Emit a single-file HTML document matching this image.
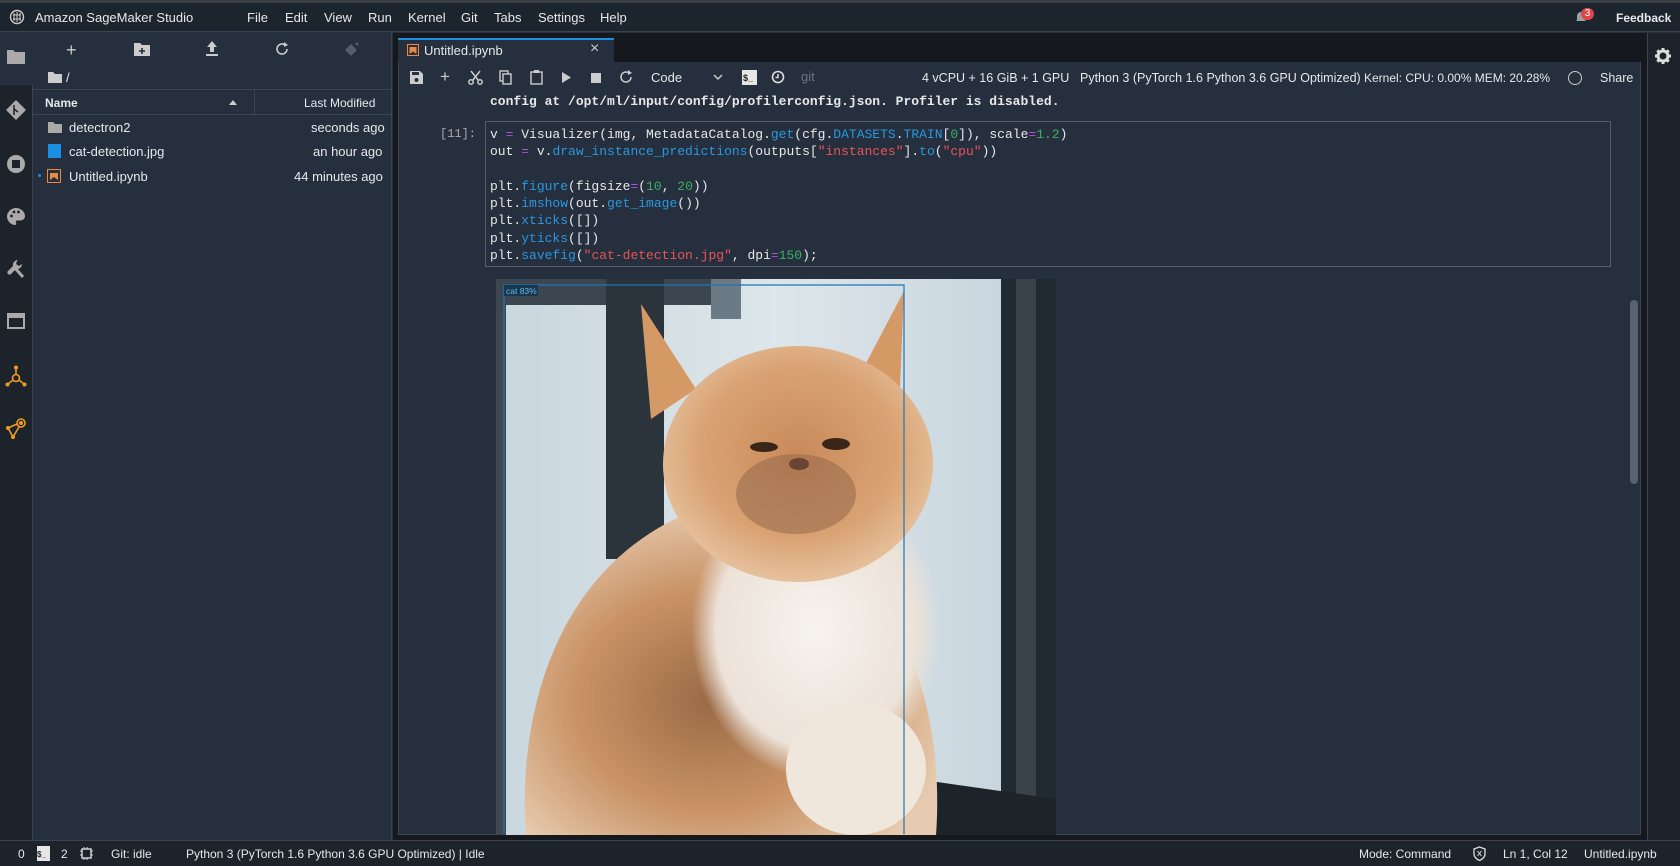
<!DOCTYPE html>
<html><head><meta charset="utf-8"><style>
*{margin:0;padding:0;box-sizing:border-box}
html,body{width:1680px;height:866px;overflow:hidden}
body{background:#252f3d;font-family:"Liberation Sans",sans-serif;color:#e6e8eb;font-size:13px;position:relative}
.a{position:absolute;white-space:nowrap}
.mono{font-family:"Liberation Mono",monospace;font-size:13px}
.k{color:#b04fd8}.f{color:#2b97e0}.s{color:#e8555a}.n{color:#3fae61}
svg{position:absolute;overflow:hidden}
</style></head><body>
<!-- top bar -->
<div class="a" style="left:0;top:0;width:1680px;height:3px;background:#3a3f45"></div>
<div class="a" style="left:0;top:3px;width:1680px;height:29px;background:#1c242d;border-bottom:1px solid #3c4450"></div>
<svg style="left:9px;top:9px" width="16" height="16" viewBox="0 0 16 16"><circle cx="8" cy="8" r="6.5" fill="none" stroke="#ccc" stroke-width="1.4"/><path d="M5 4v8M8 3v10M11 4v8M4 6h8M4 10h8" stroke="#ccc" stroke-width="1"/></svg>
<div class="a" style="left:35px;top:10px;font-size:13px">Amazon SageMaker Studio</div>
<div class="a" style="left:247px;top:10px">File</div>
<div class="a" style="left:285px;top:10px">Edit</div>
<div class="a" style="left:324px;top:10px">View</div>
<div class="a" style="left:368px;top:10px">Run</div>
<div class="a" style="left:408px;top:10px">Kernel</div>
<div class="a" style="left:461px;top:10px">Git</div>
<div class="a" style="left:494px;top:10px">Tabs</div>
<div class="a" style="left:538px;top:10px">Settings</div>
<div class="a" style="left:600px;top:10px">Help</div>
<svg style="left:1574px;top:9px" width="14" height="15" viewBox="0 0 14 15"><path d="M3 11V7a4 4 0 0 1 8 0v4l1 1H2z M6 13h2" fill="#9aa0a6"/></svg>
<div class="a" style="left:1581px;top:8px;width:13px;height:12px;border-radius:6px;background:#e0454a;font-size:10px;text-align:center;line-height:12px;color:#fff">3</div>
<div class="a" style="left:1616px;top:11px;font-size:12px;font-weight:bold">Feedback</div>

<!-- left icon bar -->
<div class="a" style="left:0;top:33px;width:33px;height:807px;background:#1c232b;border-right:1px solid #3c4450"></div>
<div class="a" style="left:0;top:33px;width:33px;height:52px;background:#252f3d"></div>
<svg style="left:7px;top:48px" width="18" height="16" viewBox="0 0 18 16"><path d="M0 2h6l2 2h10v12H0z" fill="#aaa"/></svg>
<svg style="left:6px;top:100px" width="20" height="20" viewBox="0 0 20 20"><path d="M10 0l10 10-10 10L0 10z" fill="#aaa"/><path d="M8 5v10M8 9l4 3" stroke="#1c232b" stroke-width="1.5"/></svg>
<svg style="left:6px;top:154px" width="20" height="20"><circle cx="10" cy="10" r="9" fill="#aaa"/><rect x="6" y="6" width="8" height="8" fill="#1c232b"/></svg>
<svg style="left:7px;top:208px" width="18" height="17" viewBox="0 0 18 17"><path d="M9 0C4 0 0 4 0 8.5S4 17 8 17c1.5 0 1.5-1.5 1-2.5s0-2 1.5-2H13c3 0 5-2 5-4.5C18 4 14 0 9 0z" fill="#aaa"/><circle cx="4.5" cy="8" r="1.4" fill="#1c232b"/><circle cx="7" cy="4" r="1.4" fill="#1c232b"/><circle cx="11.5" cy="4" r="1.4" fill="#1c232b"/></svg>
<svg style="left:7px;top:259px" width="18" height="19" viewBox="0 0 18 19"><path d="M11 1a5 5 0 0 0-5 6L1 12a2 2 0 0 0 3 3l5-5a5 5 0 0 0 6-5l-3 2-3-2 1-3z" fill="#aaa"/><path d="M8 9l8 9" stroke="#aaa" stroke-width="3"/></svg>
<svg style="left:7px;top:313px" width="18" height="16"><rect x="1" y="1" width="16" height="14" fill="none" stroke="#aaa" stroke-width="2"/><rect x="1" y="1" width="16" height="4" fill="#aaa"/></svg>
<svg style="left:5px;top:365px" width="22" height="22" viewBox="0 0 22 22"><g stroke="#f29b1d" stroke-width="1.6" fill="none"><circle cx="11" cy="13" r="3.5"/><path d="M11 9.5V3M8 15l-5 4M14 15l5 4"/></g><g fill="#f29b1d"><circle cx="11" cy="2.5" r="2"/><circle cx="2.5" cy="19.5" r="2"/><circle cx="19.5" cy="19.5" r="2"/></g></svg>
<svg style="left:5px;top:417px" width="22" height="22" viewBox="0 0 22 22"><g stroke="#f29b1d" stroke-width="1.6" fill="none"><circle cx="16" cy="6" r="4"/><path d="M12 7L3 11l5 9 6-10"/></g><g fill="#f29b1d"><circle cx="16" cy="6" r="2"/><circle cx="3" cy="11" r="2"/><circle cx="8" cy="20" r="2"/></g></svg>

<!-- file panel -->
<div class="a" style="left:33px;top:33px;width:359px;height:807px;background:#252f3d;border-right:1px solid #3c4450"></div>
<div class="a" style="left:66px;top:40px;font-size:18px;color:#ccc">+</div>
<svg style="left:134px;top:42px" width="16" height="14"><path d="M0 1h6l2 2h8v11H0z" fill="#ccc"/><path d="M8 6v6M5 9h6" stroke="#252f3d" stroke-width="1.6"/></svg>
<svg style="left:205px;top:41px" width="14" height="15"><path d="M7 0l5 6H9v5H5V6H2z M1 13h12v2H1z" fill="#ccc"/></svg>
<svg style="left:275px;top:42px" width="14" height="14"><path d="M12 7a5 5 0 1 1-2-4" fill="none" stroke="#ccc" stroke-width="1.6"/><path d="M9 0l4 3-4 2z" fill="#ccc"/></svg>
<svg style="left:345px;top:42px" width="14" height="14"><path d="M6 2l6 6-6 6-6-6z" fill="#555d68"/><circle cx="12" cy="2" r="1.5" fill="#555d68"/></svg>
<svg style="left:48px;top:71px" width="14" height="12"><path d="M0 1h5l2 2h7v9H0z" fill="#ccc"/></svg>
<div class="a" style="left:66px;top:70px;font-size:13px">/</div>
<div class="a" style="left:33px;top:89px;width:358px;height:26px;border-top:1px solid #3c4450;border-bottom:1px solid #3c4450"></div>
<div class="a" style="left:254px;top:90px;width:1px;height:25px;background:#3c4450"></div>
<div class="a" style="left:45px;top:96px;font-weight:bold;font-size:12px">Name</div>
<svg style="left:229px;top:99px" width="8" height="6"><path d="M0 6l4-5 4 5z" fill="#ccc"/></svg>
<div class="a" style="left:304px;top:96px;font-size:12px">Last Modified</div>
<svg style="left:48px;top:121px" width="14" height="12"><path d="M0 1h5l2 2h7v9H0z" fill="#aaa"/></svg>
<div class="a" style="left:69px;top:120px">detectron2</div>
<div class="a" style="left:311px;top:120px">seconds ago</div>
<div class="a" style="left:48px;top:144px;width:13px;height:14px;background:#1a8fe3"></div>
<div class="a" style="left:69px;top:144px">cat-detection.jpg</div>
<div class="a" style="left:313px;top:144px">an hour ago</div>
<div class="a" style="left:38px;top:174px;width:3px;height:3px;border-radius:2px;background:#1a8fe3"></div>
<svg style="left:47px;top:169px" width="14" height="14"><rect x="0.5" y="0.5" width="13" height="13" fill="#2a2f36" stroke="#e88a4a"/><path d="M3 11V4h8v7l-4-3z" fill="#e88a4a"/></svg>
<div class="a" style="left:69px;top:169px">Untitled.ipynb</div>
<div class="a" style="left:294px;top:169px">44 minutes ago</div>

<!-- main area -->
<div class="a" style="left:393px;top:33px;width:1254px;height:807px;background:#15191e"></div>
<div class="a" style="left:398px;top:38px;width:216px;height:25px;background:#252f3d;border-top:2px solid #1a8fe3"></div>
<svg style="left:407px;top:44px" width="12" height="12"><rect x="0.5" y="0.5" width="11" height="11" fill="#2a2f36" stroke="#e88a4a"/><path d="M2.5 10V3h7v7l-3.5-2.5z" fill="#e88a4a"/></svg>
<div class="a" style="left:424px;top:43px;font-size:13px">Untitled.ipynb</div>
<div class="a" style="left:590px;top:40px;font-size:16px;color:#ccc">×</div>
<div class="a" style="left:398px;top:62px;width:1243px;height:773px;background:#252f3d;border:1px solid #3c4450;border-top:none"></div>

<!-- toolbar -->
<svg style="left:410px;top:71px" width="13" height="13"><path d="M0 0h10l3 3v10H0z" fill="#ccc"/><rect x="2" y="1" width="7" height="3" fill="#252f3d"/><circle cx="6.5" cy="9" r="2" fill="#252f3d"/></svg>
<div class="a" style="left:440px;top:67px;font-size:17px;color:#ccc">+</div>
<svg style="left:468px;top:70px" width="15" height="15"><g stroke="#ccc" stroke-width="1.5" fill="none"><circle cx="3" cy="12" r="2.2"/><circle cx="12" cy="12" r="2.2"/><path d="M4.5 10.5L12 1M10.5 10.5L3 1"/></g></svg>
<svg style="left:499px;top:70px" width="13" height="15"><rect x="1" y="1" width="8" height="10" fill="none" stroke="#ccc" stroke-width="1.4"/><rect x="4" y="4" width="8" height="10" fill="#252f3d" stroke="#ccc" stroke-width="1.4"/></svg>
<svg style="left:530px;top:70px" width="13" height="15"><rect x="1" y="2" width="11" height="12" fill="none" stroke="#ccc" stroke-width="1.4"/><rect x="4" y="0" width="5" height="3" fill="#ccc"/></svg>
<svg style="left:562px;top:72px" width="9" height="11"><path d="M0 0l9 5.5L0 11z" fill="#ccc"/></svg>
<div class="a" style="left:591px;top:73px;width:10px;height:10px;background:#ccc"></div>
<svg style="left:619px;top:70px" width="14" height="14"><path d="M12 7a5 5 0 1 1-2-4" fill="none" stroke="#ccc" stroke-width="1.5"/><path d="M9 0l4 3-4 2z" fill="#ccc"/></svg>
<div class="a" style="left:651px;top:70px;font-size:13px">Code</div>
<svg style="left:713px;top:74px" width="10" height="7"><path d="M1 1l4 4 4-4" fill="none" stroke="#ccc" stroke-width="1.5"/></svg>
<div class="a" style="left:742px;top:70px;width:15px;height:15px;background:#e6e6e6;color:#222;font-size:9px;font-weight:bold;line-height:17px;padding-left:1px;overflow:hidden">$_</div>
<svg style="left:771px;top:70px" width="14" height="14"><circle cx="7" cy="7" r="5.5" fill="none" stroke="#ddd" stroke-width="1.6"/><path d="M7 4v3.5H4.5" fill="none" stroke="#ddd" stroke-width="1.5"/></svg>
<div class="a" style="left:801px;top:69px;color:#6b7380;font-size:13px">git</div>
<div class="a" style="left:922px;top:71px;font-size:12.5px">4 vCPU + 16 GiB + 1 GPU</div>
<div class="a" style="left:1080px;top:71px;font-size:12.5px">Python 3 (PyTorch 1.6 Python 3.6 GPU Optimized)</div>
<div class="a" style="left:1364px;top:71px;font-size:12px">Kernel: CPU: 0.00% MEM: 20.28%</div>
<div class="a" style="left:1568px;top:71px;width:14px;height:14px;border:1.5px solid #ccc;border-radius:7px"></div>
<div class="a" style="left:1600px;top:71px;font-size:12.5px">Share</div>

<!-- output text -->
<div class="a mono" style="left:490px;top:94px;font-weight:bold;color:#e8e8e8">config at /opt/ml/input/config/profilerconfig.json. Profiler is disabled.</div>

<!-- code cell -->
<div class="a mono" style="left:440px;top:127px;color:#aaa;font-size:12px">[11]:</div>
<div class="a" style="left:485px;top:121px;width:1126px;height:146px;border:1px solid #555e6a;background:#252f3d"></div>
<pre class="mono" style="position:absolute;white-space:pre;left:490px;top:126px;line-height:17.3px;color:#e8e8e8">v <span class="k">=</span> Visualizer(img, MetadataCatalog.<span class="f">get</span>(cfg.<span class="f">DATASETS</span>.<span class="f">TRAIN</span>[<span class="n">0</span>]), scale<span class="k">=</span><span class="n">1.2</span>)
out <span class="k">=</span> v.<span class="f">draw_instance_predictions</span>(outputs[<span class="s">"instances"</span>].<span class="f">to</span>(<span class="s">"cpu"</span>))

plt.<span class="f">figure</span>(figsize<span class="k">=</span>(<span class="n">10</span>, <span class="n">20</span>))
plt.<span class="f">imshow</span>(out.<span class="f">get_image</span>())
plt.<span class="f">xticks</span>([])
plt.<span class="f">yticks</span>([])
plt.<span class="f">savefig</span>(<span class="s">"cat-detection.jpg"</span>, dpi<span class="k">=</span><span class="n">150</span>);</pre>

<!-- image -->
<svg style="left:496px;top:279px" width="560" height="556" viewBox="0 0 560 556">
<defs>
<linearGradient id="bg" x1="0" x2="1"><stop offset="0" stop-color="#c9d6de"/><stop offset="0.5" stop-color="#dde6ea"/><stop offset="1" stop-color="#c4d2dc"/></linearGradient>
<radialGradient id="head" cx="0.5" cy="0.45" r="0.6"><stop offset="0" stop-color="#c98a5a"/><stop offset="0.6" stop-color="#d9a273"/><stop offset="1" stop-color="#e9c9a8"/></radialGradient>
<radialGradient id="body" cx="0.45" cy="0.6" r="0.6"><stop offset="0" stop-color="#9a6a45"/><stop offset="0.55" stop-color="#c99366"/><stop offset="1" stop-color="#e7cbb0"/></radialGradient>
<radialGradient id="chest" cx="0.5" cy="0.5" r="0.5"><stop offset="0" stop-color="#f7f3ef"/><stop offset="0.8" stop-color="#ece2d8"/><stop offset="1" stop-color="#ece2d8" stop-opacity="0"/></radialGradient>
</defs>
<rect width="560" height="556" fill="url(#bg)"/>
<rect x="0" y="0" width="215" height="26" fill="#3c4650"/>
<rect x="110" y="0" width="58" height="280" fill="#2b333b"/>
<rect x="0" y="26" width="10" height="530" fill="#3d4852"/>
<rect x="215" y="0" width="30" height="40" fill="#6c7a86"/>
<rect x="505" y="0" width="55" height="556" fill="#222a31"/>
<rect x="520" y="0" width="20" height="556" fill="#38424b"/>
<path d="M420 500L560 520V556H400z" fill="#1d2429"/>
<path d="M30 556C20 420 70 260 235 220C400 260 450 420 440 556z" fill="url(#body)"/>
<ellipse cx="320" cy="350" rx="125" ry="150" fill="url(#chest)"/>
<ellipse cx="360" cy="490" rx="70" ry="66" fill="#efe6dc"/>
<path d="M145 25l55 85-45 30z M408 12l-50 95 45 25z" fill="#d59966"/>
<ellipse cx="302" cy="185" rx="135" ry="118" fill="url(#head)"/>
<ellipse cx="300" cy="215" rx="60" ry="40" fill="#8e6448" opacity="0.5"/>
<ellipse cx="268" cy="168" rx="14" ry="5" fill="#3a2519"/>
<ellipse cx="340" cy="165" rx="14" ry="6" fill="#3a2519"/>
<ellipse cx="303" cy="185" rx="10" ry="6" fill="#6b4333"/>
<path d="M8 555V6h400v549" fill="none" stroke="#1f76b4" stroke-width="1.2"/>
<rect x="8" y="6" width="34" height="11" fill="#17384f"/>
<text x="10" y="15" font-family="Liberation Sans" font-size="8.5" fill="#6cb5e8">cat 83%</text>
</svg>
<div class="a" style="left:1630px;top:300px;width:8px;height:184px;border-radius:4px;background:#5a6270"></div>

<!-- right bar -->
<div class="a" style="left:1647px;top:33px;width:33px;height:807px;background:#1c232b;border-left:1px solid #3c4450"></div>
<svg style="left:1655px;top:48px" width="16" height="16" viewBox="0 0 16 16"><circle cx="8" cy="8" r="5" fill="none" stroke="#ddd" stroke-width="3"/><g stroke="#ddd" stroke-width="3"><path d="M8 0v3M8 13v3M0 8h3M13 8h3M2.3 2.3l2 2M11.7 11.7l2 2M2.3 13.7l2-2M11.7 4.3l2-2"/></g></svg>

<!-- status bar -->
<div class="a" style="left:0;top:840px;width:1680px;height:26px;background:#1c232b;border-top:1px solid #3c4450;overflow:hidden">
<div class="a" style="left:18px;top:6px;font-size:12px;line-height:14px">0</div>
<div class="a" style="left:37px;top:5px;width:13px;height:15px;background:#e6e6e6;color:#222;font-size:8px;font-weight:bold;line-height:17px;overflow:hidden">$_</div>
<div class="a" style="left:61px;top:6px;font-size:12px;line-height:14px">2</div>
<svg style="left:80px;top:6px" width="13" height="13"><rect x="2" y="2" width="9" height="9" fill="none" stroke="#ddd" stroke-width="1.4"/><path d="M4 0v2M7 0v2M4 11v2M7 11v2M0 4h2M0 8h2M11 4h2M11 8h2" stroke="#ddd"/></svg>
<div class="a" style="left:111px;top:6px;font-size:12px;line-height:14px">Git: idle</div>
<div class="a" style="left:186px;top:6px;font-size:12px;line-height:14px">Python 3 (PyTorch 1.6 Python 3.6 GPU Optimized) | Idle</div>
<div class="a" style="left:1359px;top:6px;font-size:12px;line-height:14px">Mode: Command</div>
<svg style="left:1473px;top:5px" width="13" height="15"><path d="M6.5 1L12 3v5c0 3-3 5.5-5.5 6.5C4 13.5 1 11 1 8V3z" fill="none" stroke="#ddd" stroke-width="1.3"/><path d="M4.5 5l4 5M8.5 5l-4 5" stroke="#ddd"/></svg>
<div class="a" style="left:1503px;top:6px;font-size:12px;line-height:14px">Ln 1, Col 12</div>
<div class="a" style="left:1584px;top:6px;font-size:12px;line-height:14px">Untitled.ipynb</div>
</div>
</body></html>
